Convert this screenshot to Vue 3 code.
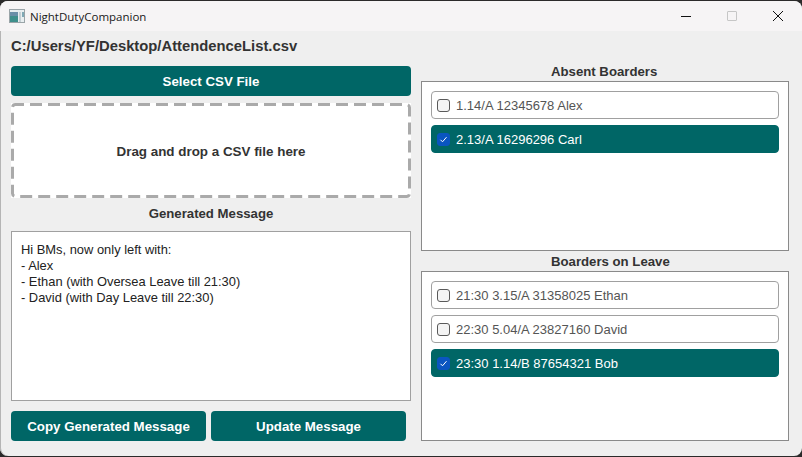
<script setup>
const absent = [
  { text: '1.14/A 12345678 Alex', checked: false },
  { text: '2.13/A 16296296 Carl', checked: true },
]
const leave = [
  { text: '21:30 3.15/A 31358025 Ethan', checked: false },
  { text: '22:30 5.04/A 23827160 David', checked: false },
  { text: '23:30 1.14/B 87654321 Bob', checked: true },
]
const groups = [
  { title: 'Absent Boarders', items: absent },
  { title: 'Boarders on Leave', items: leave },
]
</script>

<template>
  <div class="desktop">
    <div class="window">
      <header class="titlebar">
        <svg class="app-icon" width="16" height="14" viewBox="0 0 16 14">
          <rect x="0.5" y="0.5" width="15" height="13" fill="#e8eef0" stroke="#9aa4a8" />
          <rect x="1" y="3" width="8" height="10" fill="#3f8f8c" />
          <rect x="1" y="3" width="8" height="4" fill="#6a8fa8" />
          <rect x="10" y="3" width="2" height="10" fill="#c4cfd4" />
          <rect x="13" y="3" width="2" height="5" fill="#7fa9b5" />
        </svg>
        <span class="app-name">NightDutyCompanion</span>
        <div class="controls">
          <span class="ctl">
            <svg width="10" height="10" viewBox="0 0 10 10"><path d="M0 5.5h10" stroke="#111" fill="none" /></svg>
          </span>
          <span class="ctl">
            <svg width="10" height="10" viewBox="0 0 10 10"><rect x="0.5" y="0.5" width="9" height="9" rx="0.5" stroke="#c6c6c6" fill="none" /></svg>
          </span>
          <span class="ctl">
            <svg width="10" height="10" viewBox="0 0 10 10"><path d="M0 0l10 10M10 0L0 10" stroke="#111" fill="none" /></svg>
          </span>
        </div>
      </header>

      <div class="path">C:/Users/YF/Desktop/AttendenceList.csv</div>

      <main class="columns">
        <section class="left">
          <button class="btn select">Select CSV File</button>
          <div class="drop">
            <svg class="dash" width="400" height="95" viewBox="0 0 400 95">
              <rect x="1.5" y="1.5" width="397" height="92" rx="3" fill="none" stroke="#aaa" stroke-width="3" stroke-dasharray="12 6" stroke-dashoffset="3.5" />
            </svg>
            Drag and drop a CSV file here
          </div>
          <h2 class="label gen">Generated Message</h2>
          <div class="message">
            <div>Hi BMs, now only left with:</div>
            <div>- Alex</div>
            <div>- Ethan (with Oversea Leave till 21:30)</div>
            <div>- David (with Day Leave till 22:30)</div>
          </div>
          <div class="actions">
            <button class="btn">Copy Generated Message</button>
            <button class="btn">Update Message</button>
          </div>
        </section>

        <section class="right">
          <div v-for="g in groups" :key="g.title" class="group">
            <h2 class="label side">{{ g.title }}</h2>
            <div class="panel">
              <div v-for="it in g.items" :key="it.text" class="item" :class="{ on: it.checked }">
                <span class="box">
                  <svg v-if="it.checked" width="9" height="9" viewBox="0 0 9 9">
                    <path d="M1.5 4.8l2 2 4-4.6" stroke="#fff" fill="none" />
                  </svg>
                </span>
                <span>{{ it.text }}</span>
              </div>
            </div>
          </div>
        </section>
      </main>
    </div>
  </div>
</template>

<style>
html, body { margin: 0; background: #2b2a2a; overflow: hidden; }
</style>

<style scoped>
.desktop {
  width: 802px;
  height: 457px;
  padding: 1px 0;
  box-sizing: border-box;
  background: #2b2a2a;
  font-family: "Liberation Sans", Arial, sans-serif;
}
.window {
  height: 455px;
  background: #efefef;
  border-radius: 8px;
  overflow: hidden;
  box-shadow: inset 1px 0 0 #b5b5b5;
}
.titlebar {
  height: 30px;
  display: flex;
  align-items: center;
  background: #f6f4f5;
  padding-left: 9px;
}
.app-icon { flex: none; }
.app-name {
  margin-left: 5px;
  font: 11.5px "Open Sans", "Liberation Sans", sans-serif;
  color: #1a1a1a;
}
.controls { margin-left: auto; margin-right: 1px; display: flex; }
.ctl {
  width: 46px;
  height: 30px;
  display: flex;
  align-items: center;
  justify-content: center;
}
.path {
  height: 30px;
  padding-left: 11px;
  display: flex;
  align-items: center;
  font-size: 14.8px;
  font-weight: 700;
  color: #333;
}
.columns {
  display: flex;
  gap: 10px;
  padding-left: 11px;
}
.left { width: 400px; padding-top: 5px; }
.right { width: 368px; padding-top: 3px; }
.btn {
  display: block;
  height: 30px;
  border: 0;
  border-radius: 4px;
  background: #006666;
  color: #fff;
  font: 700 13.3px "Liberation Sans", Arial, sans-serif;
  padding: 0;
}
.select { width: 400px; }
.drop {
  position: relative;
  box-sizing: border-box;
  height: 95px;
  margin-top: 7px;
  padding-top: 2px;
  background: #fff;
  display: flex;
  align-items: center;
  justify-content: center;
  font-size: 13.4px;
  font-weight: 700;
  color: #333;
}
.dash { position: absolute; inset: 0; }
.label {
  margin: 0;
  height: 17px;
  line-height: 15px;
  font-size: 13.2px;
  font-weight: 700;
  color: #333;
}
.side { padding-left: 130px; }
.gen { margin-top: 8px; height: 25px; line-height: 16px; text-align: center; }
.message {
  box-sizing: border-box;
  height: 170px;
  padding: 10px 9px;
  background: #fff;
  border: 1px solid #a0a0a0;
  font-size: 12.9px;
  line-height: 16px;
  color: #222;
}
.actions { display: flex; gap: 5px; margin-top: 10px; }
.actions .btn { width: 195px; }
.group + .group { margin-top: 3px; }
.panel {
  box-sizing: border-box;
  height: 170px;
  padding: 9px;
  background: #fff;
  border: 1px solid #8a8a8a;
  display: flex;
  flex-direction: column;
  gap: 6px;
}
.item {
  box-sizing: border-box;
  height: 28px;
  display: flex;
  align-items: center;
  gap: 6px;
  padding-left: 5px;
  border: 1px solid #a0a0a0;
  border-radius: 4px;
  background: #fff;
  color: #555;
  font-size: 13px;
}
.item.on {
  background: #006666;
  border-color: #006666;
  color: #fff;
}
.box {
  box-sizing: border-box;
  width: 13px;
  height: 13px;
  flex: none;
  border: 1px solid #5a5a5a;
  border-radius: 3px;
  background: #f4f4f4;
  display: flex;
  align-items: center;
  justify-content: center;
}
.on .box { background: #0a55c0; border-color: #0a55c0; }
</style>
